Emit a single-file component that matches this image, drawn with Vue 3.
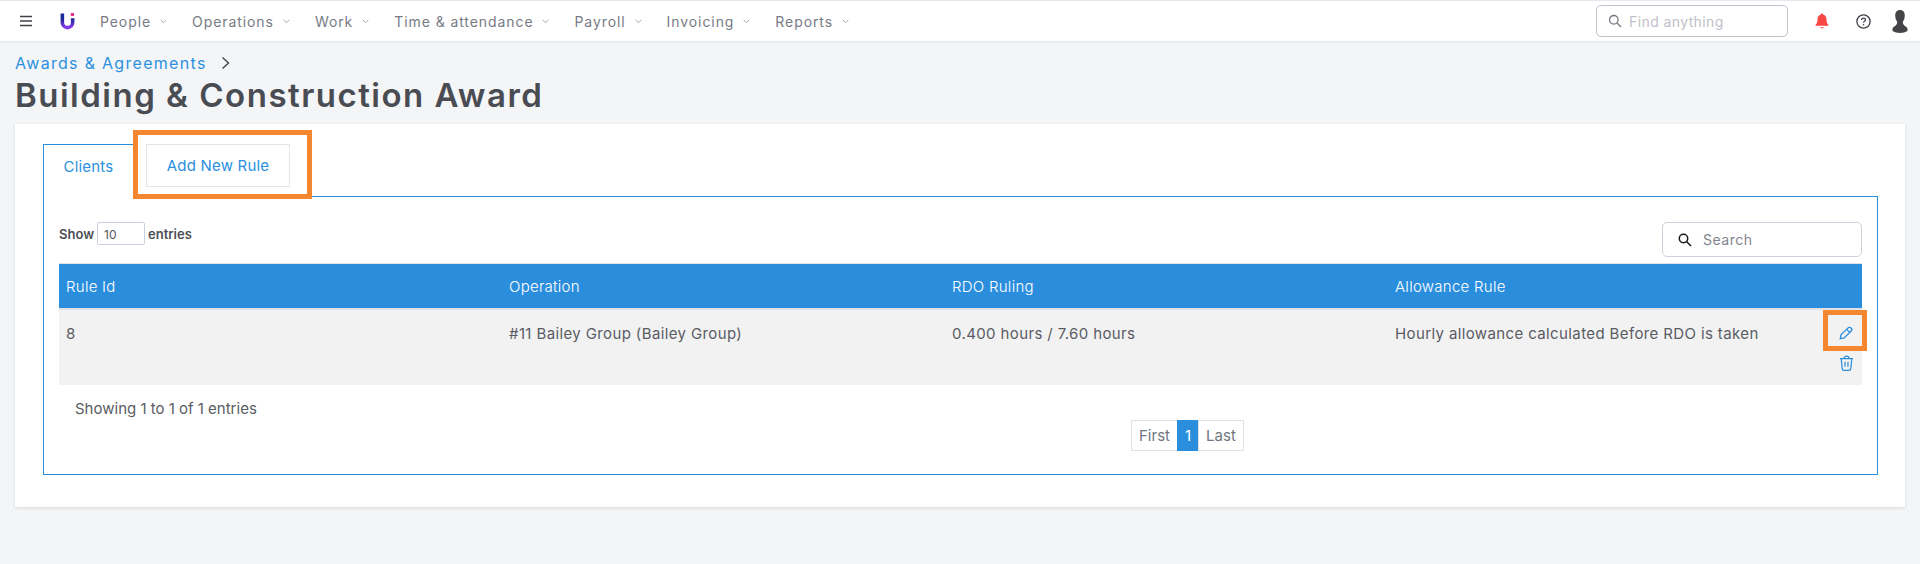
<script setup>
const menu = ["People", "Operations", "Work", "Time & attendance", "Payroll", "Invoicing", "Reports"];
const columns = ["Rule Id", "Operation", "RDO Ruling", "Allowance Rule"];
const rows = [
  { id: 8, operation: "#11 Bailey Group (Bailey Group)", ruling: "0.400 hours / 7.60 hours", rule: "Hourly allowance calculated Before RDO is taken" },
];
</script>

<template>
  <div class="page">
    <header class="topbar">
      <svg class="burger" width="14" height="12" viewBox="0 0 14 12">
        <path d="M1 1.5h12M1 6h12M1 10.500h12" stroke="#3f4148" stroke-width="1.600" fill="none" />
      </svg>
      <svg class="logo" width="15" height="19" viewBox="0 0 16 19">
        <defs>
          <linearGradient id="logoGrad" x1="0" y1="0" x2="0" y2="1">
            <stop offset="0.4" stop-color="#1c2a9c" />
            <stop offset="1" stop-color="#8a3be8" />
          </linearGradient>
        </defs>
        <path d="M2.500 1v9.500a5.500 5.500 0 0 0 11 0V6" stroke="url(#logoGrad)" stroke-width="3.800" fill="none" />
        <rect x="11.500" y="0.500" width="3.500" height="3" fill="#e8257f" />
      </svg>
      <nav class="menu">
        <a v-for="m in menu" :key="m" class="menu-item">
          {{ m }}
          <svg width="7" height="5" viewBox="0 0 7 5"><path d="M.7 1l2.800 2.600L6.300 1" stroke="#a3a7b0" stroke-width="1" fill="none" /></svg>
        </a>
      </nav>
      <div class="find">
        <svg width="14" height="14" viewBox="0 0 14 14"><circle cx="5.800" cy="5.800" r="4.300" stroke="#77797f" stroke-width="1.300" fill="none" /><path d="M9 9l4 4" stroke="#77797f" stroke-width="1.300" /></svg>
        <span>Find anything</span>
      </div>
      <svg class="bell" width="14" height="16" viewBox="0 0 14 16">
        <path d="M7 .5c.7 0 1.100.5 1.100 1.100C10.500 2.200 11.500 4.200 11.500 6.500c0 3 .8 4.300 2 5.500v.8H.5V12c1.200-1.200 2-2.500 2-5.500 0-2.300 1-4.300 3.400-4.900C5.900 1 6.300.5 7 .5z" fill="#fb4646" />
        <path d="M5 14.200h4L7.800 15.300H6.200z" fill="#fb4646" />
      </svg>
      <svg class="help" width="15" height="15" viewBox="0 0 15 15">
        <circle cx="7.500" cy="7.500" r="6.600" stroke="#3f4148" stroke-width="1.300" fill="none" />
        <path d="M5.600 5.900c0-2.400 3.900-2.400 3.900-.1 0 1.500-2 1.500-2 3" stroke="#3f4148" stroke-width="1.300" fill="none" />
        <circle cx="7.500" cy="10.700" r=".8" fill="#3f4148" />
      </svg>
      <svg class="avatar" width="16" height="23" viewBox="0 0 16 23">
        <path d="M8 0c3.200 0 4.800 2.400 4.800 5.600 0 2.600-.8 4.800-2 6.200.1 2 .6 3.400 2.400 4.400 1.400.8 2.300 1.400 2.300 3V21c-2 1.300-4.700 2-7.500 2s-5.500-.7-7.500-2v-1.800c0-1.600.9-2.200 2.300-3 1.800-1 2.300-2.400 2.400-4.400-1.200-1.400-2-3.600-2-6.200C3.200 2.400 4.800 0 8 0z" fill="#454548" />
      </svg>
    </header>

    <div class="heading">
      <div class="crumbs">
        <a>Awards &amp; Agreements</a>
        <svg width="10" height="14" viewBox="0 0 10 14"><path d="M1.500 1.500L7.500 7l-6 5.500" stroke="#45474e" stroke-width="1.400" fill="none" /></svg>
      </div>
      <h1>Building &amp; Construction Award</h1>
    </div>

    <main class="card">
      <div class="tabs">
        <a class="tab active">Clients</a>
        <a class="tab second">Add New Rule</a>
        <div class="mark mark-tab"></div>
      </div>
      <section class="panel">
        <div class="tools">
          <label class="show">
            Show <span class="num">10</span> entries
          </label>
          <div class="search">
            <svg width="14" height="14" viewBox="0 0 14 14"><circle cx="5.500" cy="5.500" r="4.200" stroke="#17181c" stroke-width="1.500" fill="none" /><path d="M8.700 8.700l4.300 4.300" stroke="#17181c" stroke-width="1.500" /></svg>
            <span>Search</span>
          </div>
        </div>
        <div class="table">
          <div class="thead">
            <div v-for="c in columns" :key="c" class="cell">{{ c }}</div>
          </div>
          <div v-for="r in rows" :key="r.id" class="trow">
            <div class="cell">{{ r.id }}</div>
            <div class="cell">{{ r.operation }}</div>
            <div class="cell">{{ r.ruling }}</div>
            <div class="cell">{{ r.rule }}</div>
            <div class="actions">
              <svg width="15" height="15" viewBox="0 0 15 15" fill="none" stroke="#2b8edd" stroke-width="1.300">
                <path d="M1.300 13.700l.7-3.800L8.800 3.100c1-1 2.400-1 3.300-.1s.9 2.300-.1 3.300L5.100 13z" />
                <path d="M7.600 4.300l3.100 3.100" />
              </svg>
              <svg width="15" height="16" viewBox="0 0 15 16" fill="none" stroke="#2b8edd" stroke-width="1.200">
                <path d="M1 3.600h13M5 3.400c0-3 5-3 5 0M2.200 3.800l1 9.800c.1 1 .8 1.700 1.800 1.700h5c1 0 1.700-.7 1.800-1.700l1-9.800" />
                <path d="M6 6.800v5M9 6.800v5" />
              </svg>
              <div class="mark mark-edit"></div>
            </div>
          </div>
        </div>
        <div class="info">Showing 1 to 1 of 1 entries</div>
        <div class="pager">
          <a>First</a>
          <a class="current">1</a>
          <a>Last</a>
        </div>
      </section>
    </main>
  </div>
</template>

<style>
html, body {
  margin: 0;
  background: #f4f5f7;
}
</style>

<style scoped>
.page {
  height: 564px;
  overflow: hidden;
  background: #f4f5f7;
  font-family: "Inter", "Open Sans", sans-serif;
  color: #55575e;
}
.topbar {
  height: 40px;
  border-top: 1px solid #ebe3f0;
  background: #fff;
  box-shadow: 0 1px 2px rgba(0, 0, 0, 0.08);
  display: flex;
  align-items: center;
  padding-left: 19px;
}
.logo {
  margin-left: 27px;
}
.menu {
  display: flex;
  margin-left: 25px;
  gap: 25px;
  flex: 1;
}
.menu-item {
  display: flex;
  align-items: center;
  gap: 9px;
  font-size: 14px;
  letter-spacing: 0.92px;
  color: #777b85;
}
.find {
  width: 192px;
  height: 32px;
  box-sizing: border-box;
  border: 1px solid #bfc1cb;
  border-radius: 5px;
  display: flex;
  align-items: center;
  gap: 7px;
  padding-left: 11px;
  font-size: 14px;
  letter-spacing: 0.4px;
  color: #bfc1c9;
}
.bell {
  margin-left: 27px;
}
.help {
  margin-left: 27px;
}
.avatar {
  margin-left: 21px;
  margin-right: 12px;
}
.heading {
  padding: 11px 15px 0;
}
.crumbs {
  display: flex;
  align-items: center;
  gap: 14px;
  height: 22px;
  font-size: 16px;
  letter-spacing: 1.3px;
  color: #2c90e0;
}
h1 {
  margin: 3px 0 0;
  font-size: 33px;
  line-height: 36px;
  font-weight: 600;
  letter-spacing: 1.5px;
  color: #4a4c53;
}
.card {
  margin: 11px 15px 0;
  height: 383px;
  box-sizing: border-box;
  padding: 20px 27px 0 28px;
  background: #fff;
  box-shadow: 0 1px 3px rgba(0, 0, 0, 0.12);
}
.tabs {
  display: flex;
  height: 52px;
  position: relative;
}
.tab {
  display: flex;
  align-items: center;
  justify-content: center;
  box-sizing: border-box;
  font-size: 15px;
  letter-spacing: 0.2px;
  color: #2c90e0;
}
.active {
  width: 90px;
  height: 53px;
  border: 1px solid #2b8edd;
  border-bottom: 0;
  border-right: 0;
  background: #fff;
  position: relative;
  z-index: 1;
  margin-bottom: -1px;
  align-items: flex-start;
  padding-top: 12px;
}
.second {
  margin-left: 13px;
  width: 144px;
  height: 43px;
  border: 1px solid #e3e5e8;
}
.mark {
  position: absolute;
  box-sizing: border-box;
  border: 5px solid #f58731;
  z-index: 2;
}
.mark-tab {
  left: 90px;
  top: -14px;
  width: 179px;
  height: 69px;
}
.panel {
  height: 279px;
  box-sizing: border-box;
  border: 1px solid #2b8edd;
  padding: 25px 15px 0;
}
.tools {
  display: flex;
  justify-content: space-between;
  height: 41px;
}
.show {
  display: flex;
  align-items: flex-start;
  gap: 3px;
  font-size: 13px;
  font-weight: 600;
  line-height: 24px;
  color: #4c4e54;
}
.num {
  width: 48px;
  height: 23px;
  box-sizing: border-box;
  border: 1px solid #c9d1dc;
  border-radius: 2px;
  padding-left: 6px;
  font-size: 12px;
  font-weight: 400;
  line-height: 24px;
  color: #55575e;
}
.search {
  width: 200px;
  height: 35px;
  box-sizing: border-box;
  border: 1px solid #ccd3dc;
  border-radius: 5px;
  display: flex;
  align-items: center;
  gap: 11px;
  padding-left: 15px;
  font-size: 14px;
  letter-spacing: 0.5px;
  color: #7f858f;
}
.table {
  width: 1803px;
}
.thead, .trow {
  display: grid;
  grid-template-columns: 443px 443px 443px 1fr 48px;
}
.thead {
  height: 45px;
  border-top: 1px solid #e0e3e6;
  box-sizing: border-box;
  align-items: center;
  background: #2b8edd;
  color: #fff;
  font-size: 15px;
  font-weight: 300;
  letter-spacing: 0.27px;
}
.trow {
  height: 77px;
  border-top: 2px solid #e0e2e5;
  box-sizing: border-box;
  background: #f2f2f3;
  font-size: 15px;
  letter-spacing: 0.38px;
  color: #5a5c63;
}
.cell {
  padding-left: 7px;
}
.trow .cell {
  padding-top: 14px;
}
.actions {
  position: relative;
  display: flex;
  flex-direction: column;
  align-items: center;
  gap: 15px;
  padding-top: 15px;
  padding-left: 16px;
}
.mark-edit {
  left: 9px;
  top: 0;
  width: 44px;
  height: 41px;
}
.info {
  padding: 12px 16px 0;
  font-size: 15px;
  line-height: 24px;
  color: #5a5c63;
}
.pager {
  display: flex;
  margin-top: -1px;
  margin-left: 1073px;
  font-size: 15px;
  line-height: 29px;
  color: #70757f;
}
.pager a {
  border: 1px solid #dfe1e8;
  padding: 0 7px;
  margin-left: -1px;
}
.pager .current {
  background: #2b8edd;
  border-color: #2b8edd;
  color: #fff;
}
</style>
